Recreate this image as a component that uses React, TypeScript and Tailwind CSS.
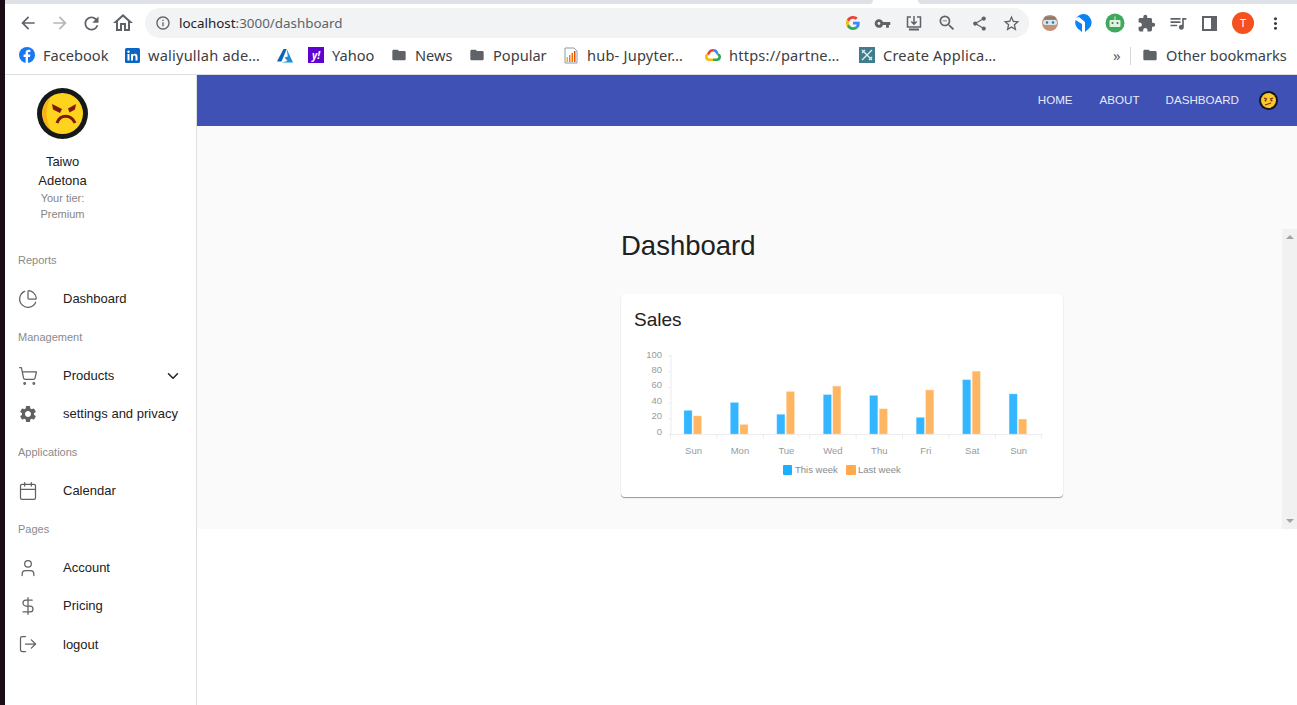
import type { ReactNode } from "react";
import { Calendar, ChevronDown, DollarSign, LogOut, PieChart, ShoppingCart, User } from "lucide-react";
import {
  MdArrowBack,
  MdArrowForward,
  MdExtension,
  MdFolder,
  MdInfoOutline,
  MdMoreVert,
  MdOutlineHome,
  MdOutlineQueueMusic,
  MdRefresh,
  MdSettings,
  MdShare,
  MdStarBorder,
  MdVpnKey,
  MdZoomOut,
} from "react-icons/md";

const thisWeek = [30, 40, 25, 50, 49, 21, 69, 51];
const lastWeek = [23, 12, 54, 61, 32, 56, 80, 19];
const days = ["Sun", "Mon", "Tue", "Wed", "Thu", "Fri", "Sat", "Sun"];

function FacebookIcon() {
  return (
    <svg width="16" height="16" viewBox="0 0 16 16">
      <circle cx="8" cy="8" r="8" fill="#1877f2" />
      <path d="M9 16V10h2l.4-2.4H9V6.2c0-.8.3-1.2 1.2-1.2h1.2V3c-.6-.1-1.2-.2-1.8-.2-1.9 0-3 1.1-3 3.1v1.7H4.6V10h2v6z" fill="#fff" />
    </svg>
  );
}

function LinkedinIcon() {
  return (
    <svg width="15" height="15" viewBox="0 0 15 15">
      <rect width="15" height="15" rx="1.5" fill="#0a66c2" />
      <rect x="2.5" y="6" width="2" height="6.5" fill="#fff" />
      <circle cx="3.5" cy="3.8" r="1.2" fill="#fff" />
      <path d="M6 6h2v1c.4-.7 1.1-1.2 2.1-1.2 1.7 0 2.4 1.1 2.4 2.8v3.9h-2V9c0-.9-.3-1.5-1.1-1.5S8 8.100 8 9v3.500H6z" fill="#fff" />
    </svg>
  );
}

function AzureIcon() {
  return (
    <svg width="16" height="14" viewBox="0 0 16 14">
      <path d="M6.500 0h3.200L4.500 12.500H0z" fill="#0a63b5" />
      <path d="M9.700 0L16 13.500H4.500l6-1.500-3-3.500 3.300-1z" fill="#1b8fdc" />
    </svg>
  );
}

function YahooIcon() {
  return (
    <span className="flex h-4 w-4 items-center justify-center bg-[#5f01d1] text-[10px] font-bold italic leading-none text-white">y!</span>
  );
}

function JupyterIcon() {
  return (
    <svg width="16" height="17" viewBox="0 0 16 17">
      <path d="M2 1h9l3 3v12H2z" fill="#fff" stroke="#8d99a6" />
      <rect x="3.500" y="10" width="1.500" height="5" fill="#f9a825" />
      <rect x="6" y="8" width="1.500" height="7" fill="#f57c00" />
      <rect x="8.500" y="6" width="1.500" height="9" fill="#ef6c00" />
      <rect x="11" y="4" width="1.500" height="11" fill="#e65100" />
    </svg>
  );
}

function CloudIcon() {
  return (
    <svg width="16" height="14" viewBox="0 0 16 14">
      <path d="M4 13h4v-2.500H4.200A1.700 1.700 0 0 1 3.500 7.300L2 5.500A4 4 0 0 0 4 13z" fill="#fbbc05" />
      <path d="M8 13h4a4 4 0 0 0 1.500-7.700l-1.300 1.900A1.700 1.700 0 0 1 11.800 10.500H8z" fill="#34a853" />
      <path d="M2 5.500l1.500 1.800A4 4 0 0 1 5 5.800a3.200 3.200 0 0 1 3-2.300V1a5.500 5.500 0 0 0-5 3z" fill="#ea4335" />
      <path d="M8 1v2.500a3.500 3.500 0 0 1 3 2l1.200 1.700 1.300-1.900A5.600 5.600 0 0 0 8 1z" fill="#4285f4" />
    </svg>
  );
}

function CrossIcon() {
  return (
    <svg width="16" height="16" viewBox="0 0 16 16">
      <rect width="16" height="16" fill="#3f7c8c" />
      <path d="M3 3l10 10M13 3L3 13M3 6l3-3M10 13l3-3" stroke="#dff0f3" strokeWidth="1.300" fill="none" />
    </svg>
  );
}

function GoogleIcon() {
  return (
    <svg width="14" height="14" viewBox="0 0 48 48">
      <path fill="#ea4335" d="M24 9.500c3.500 0 6.700 1.200 9.200 3.600l6.900-6.900C35.900 2.400 30.500 0 24 0 14.600 0 6.500 5.400 2.600 13.200l8 6.200C12.500 13.600 17.800 9.500 24 9.500z" />
      <path fill="#4285f4" d="M47 24.500c0-1.600-.1-3.100-.4-4.500H24v9h12.900c-.6 3-2.200 5.500-4.700 7.200l7.700 6C44.400 38.100 47 31.900 47 24.500z" />
      <path fill="#fbbc05" d="M10.600 28.600A14.500 14.500 0 0 1 10.600 19.400l-8-6.200a24 24 0 0 0 0 21.600z" />
      <path fill="#34a853" d="M24 48c6.500 0 11.900-2.100 15.900-5.800l-7.700-6c-2.200 1.500-4.900 2.300-8.200 2.300-6.200 0-11.500-4.200-13.400-9.900l-8 6.200C6.500 42.600 14.600 48 24 48z" />
    </svg>
  );
}

function AngryFace({ size }: { size: number }) {
  return (
    <svg width={size} height={size} viewBox="0 0 51 51">
      <circle cx="25.500" cy="25.500" r="25.500" fill="#17181a" />
      <circle cx="25.500" cy="25.500" r="20.500" fill="#fdd31e" />
      <path d="M14 9a20.500 20.500 0 0 0 0 33c-6-9-6-24 0-33z" fill="#fbb011" />
      <path d="M15 16l10 5-2 4-7-3.500z" fill="#7d1a10" />
      <path d="M39 16l-8 4.500 1.500 4 5.500-3z" fill="#7d1a10" />
      <path d="M20 35c3-9 14-9 18 0" stroke="#7d1a10" strokeWidth="3" fill="none" />
    </svg>
  );
}

function SmallFace() {
  return (
    <svg width="19" height="19" viewBox="0 0 19 19">
      <circle cx="9.500" cy="9.500" r="9.500" fill="#14161c" />
      <circle cx="9.500" cy="9.500" r="7.500" fill="#f7c92b" />
      <path d="M5 7l3 1.200M14 7l-3 1.200" stroke="#7d2a10" strokeWidth="1.300" />
      <circle cx="6.500" cy="9.500" r="1" fill="#7d2a10" />
      <circle cx="12.500" cy="9.500" r="1" fill="#7d2a10" />
      <path d="M6 14l6-2" stroke="#7d2a10" strokeWidth="1.300" />
    </svg>
  );
}

function AddressBar() {
  return (
    <div className="flex h-[30px] w-[884px] items-center rounded-full bg-[#f1f3f4] pl-[10px] pr-[8px]">
      <MdInfoOutline className="text-[#5f6368]" size={16} />
      <span className="ml-[8px] text-[13.400px] text-[#202124]">
        localhost<span className="text-[#5f6368]">:3000/dashboard</span>
      </span>
      <div className="ml-auto flex items-center gap-[14px] text-[#5f6368]">
        <GoogleIcon />
        <MdVpnKey size={17} />
        <svg width="18" height="18" viewBox="0 0 18 18" fill="none" stroke="currentColor" strokeWidth="1.500">
          <path d="M6 3H2.500v10h13V3H12M9 2v8M6.300 7.500L9 10.200l2.700-2.700" />
          <path d="M4 15.500h10" strokeWidth="2" />
        </svg>
        <MdZoomOut size={20} />
        <MdShare size={17} />
        <MdStarBorder size={19} />
      </div>
    </div>
  );
}

function ExtensionIcons() {
  return (
    <div className="ml-[11px] flex items-center gap-[12px] text-[#5f6368]">
      <svg width="20" height="20" viewBox="0 0 20 20">
        <circle cx="10" cy="10" r="8" fill="#c69176" />
        <rect x="3" y="7" width="14" height="5" rx="2.500" fill="#d7e8ec" />
        <circle cx="7" cy="9.500" r="1.200" fill="#3c6e8f" />
        <circle cx="13" cy="9.500" r="1.200" fill="#3c6e8f" />
        <path d="M5 3.500h10l1 3H4z" fill="#8c7b6b" />
      </svg>
      <svg width="20" height="20" viewBox="0 0 20 20" className="ml-[1px]">
        <path d="M10 1a8.500 8.500 0 0 1 6 14.500L12 19V9L6 4 3.500 5A8.500 8.500 0 0 1 10 1z" fill="#0b84f3" />
        <path d="M2.500 7L9 11v8l-3-2.500A9 9 0 0 1 2.500 7z" fill="#0b84f3" />
      </svg>
      <svg width="20" height="20" viewBox="0 0 20 20">
        <circle cx="10" cy="10" r="9.500" fill="#3fa85c" />
        <rect x="4.500" y="7" width="11" height="7" rx="1" fill="#dff2e3" />
        <circle cx="7.500" cy="10" r="1" fill="#2e7d4a" />
        <circle cx="12.500" cy="10" r="1" fill="#2e7d4a" />
        <rect x="9.500" y="3.500" width="1" height="3.500" fill="#dff2e3" />
      </svg>
      <MdExtension size={19} />
      <MdOutlineQueueMusic size={20} />
      <span className="ml-[2px] h-[15px] w-[15px] border-2 border-r-[6px] border-[#5f6368]" />
      <span className="ml-[3px] flex h-[22px] w-[22px] items-center justify-center rounded-full bg-[#f4511e] text-[11px] text-white">T</span>
      <MdMoreVert size={19} className="text-[#3c4043]" />
    </div>
  );
}

function Bookmark({ icon, label, width, cut }: { icon: ReactNode; label: string; width: string; cut?: boolean }) {
  return (
    <div className={`flex items-center gap-[8px] ${width}`}>
      {icon}
      <span className={`whitespace-nowrap text-[14.600px] text-[#3c4043] ${cut ? "tracking-[0.2px]" : ""}`}>{label}</span>
    </div>
  );
}

function BrowserChrome() {
  const folder = <MdFolder size={16} className="text-[#5f6368]" />;
  return (
    <div className="font-['Noto_Sans',sans-serif]">
      <div className="flex h-[4px] bg-white">
        <div className="h-full w-[868px] rounded-br-[4px] bg-[#dee1e6]" />
        <div className="ml-[45px] h-full flex-1 rounded-bl-[4px] bg-[#dee1e6]" />
      </div>
      <div className="flex h-[38px] items-center pl-[13px]">
        <MdArrowBack size={20} className="text-[#5f6368]" />
        <MdArrowForward size={20} className="ml-[12px] text-[#b4b7bb]" />
        <MdRefresh size={21} className="ml-[11px] text-[#5f6368]" />
        <MdOutlineHome size={24} className="ml-[9px] text-[#5f6368]" />
        <div className="ml-[10px]">
          <AddressBar />
        </div>
        <ExtensionIcons />
      </div>
      <div className="flex h-[33px] items-center border-b border-[#dcdee1] pb-[5px] pl-[14px]">
        <Bookmark icon={<FacebookIcon />} label="Facebook" width="w-[106px]" />
        <Bookmark icon={<LinkedinIcon />} label="waliyullah ade…" width="w-[152px]" cut />
        <div className="w-[31px]">
          <AzureIcon />
        </div>
        <Bookmark icon={<YahooIcon />} label="Yahoo" width="w-[83px]" />
        <Bookmark icon={folder} label="News" width="w-[78px]" />
        <Bookmark icon={folder} label="Popular" width="w-[94px]" />
        <Bookmark icon={<JupyterIcon />} label="hub- Jupyter…" width="w-[142px]" cut />
        <Bookmark icon={<CloudIcon />} label="https://partne…" width="w-[154px]" cut />
        <Bookmark icon={<CrossIcon />} label="Create Applica…" width="w-[254px]" cut />
        <span className="w-[9px] text-[15px] leading-none text-[#5f6368]">»</span>
        <span className="ml-[8px] h-[18px] w-px bg-[#d5d7da]" />
        <div className="ml-[11px]">
          <Bookmark icon={folder} label="Other bookmarks" width="w-[150px]" />
        </div>
      </div>
    </div>
  );
}

function Subheader({ label }: { label: string }) {
  return <div className="flex h-[38.4px] items-center pl-[13px] text-[11px] text-[#8a8a8a]">{label}</div>;
}

function NavItem({ icon, label, trailing }: { icon: ReactNode; label: string; trailing?: ReactNode }) {
  return (
    <div className="flex h-[38.4px] items-center pl-[13px] text-[13px] text-[#212121]">
      <span className="flex w-[45px] items-center text-[#616161]">{icon}</span>
      <span className="whitespace-nowrap">{label}</span>
      {trailing}
    </div>
  );
}

function Sidebar() {
  return (
    <aside className="w-[192px] shrink-0 border-r border-[#e0e0e0] bg-white font-['Liberation_Sans',sans-serif]">
      <div className="flex h-[166.200px] w-[115px] flex-col items-center pt-[13px] text-center">
        <AngryFace size={51} />
        <div className="mt-[13px] text-[13px] leading-[19px] text-[#212121]">
          Taiwo
          <br />
          Adetona
        </div>
        <div className="text-[11px] leading-[16px] text-[#858585]">
          Your tier:
          <br />
          Premium
        </div>
      </div>
      <Subheader label="Reports" />
      <NavItem icon={<PieChart size={20} strokeWidth={1.5} />} label="Dashboard" />
      <Subheader label="Management" />
      <NavItem
        icon={<ShoppingCart size={20} strokeWidth={1.5} />}
        label="Products"
        trailing={<ChevronDown size={18} strokeWidth={2} className="ml-auto mr-[14px] text-[#212121]" />}
      />
      <NavItem icon={<MdSettings size={20} />} label="settings and privacy" />
      <Subheader label="Applications" />
      <NavItem icon={<Calendar size={20} strokeWidth={1.5} />} label="Calendar" />
      <Subheader label="Pages" />
      <NavItem icon={<User size={20} strokeWidth={1.5} />} label="Account" />
      <NavItem icon={<DollarSign size={20} strokeWidth={1.5} />} label="Pricing" />
      <NavItem icon={<LogOut size={20} strokeWidth={1.5} />} label="logout" />
    </aside>
  );
}

function SalesChart() {
  const y = (v: number) => 434 - v * 0.785;
  const axis = "#ececf0";
  const label = "#9a9a9a";
  return (
    <svg width="442" height="140" viewBox="621 345 442 140" className="block">
      <g fontFamily="Liberation Sans, sans-serif" fontSize="9.500" fill={label}>
        {[0, 20, 40, 60, 80, 100].map((v) => (
          <g key={v}>
            <line x1="668" x2="671" y1={y(v) + 0.5} y2={y(v) + 0.5} stroke={axis} />
            <text x="662" y={434.5 - v * 0.77} textAnchor="end">{v}</text>
          </g>
        ))}
        <line x1="671" x2="671" y1="355" y2="435" stroke={axis} />
        <line x1="670" x2="1042" y1="434.500" y2="434.500" stroke={axis} />
        {[...Array(9)].map((_, i) => (
          <line key={i} x1={670.5 + i * 46.4} x2={670.5 + i * 46.4} y1="434" y2="439" stroke={axis} />
        ))}
        {days.map((d, i) => (
          <text key={i} x={693.5 + i * 46.45} y="454" textAnchor="middle">{d}</text>
        ))}
        {thisWeek.map((v, i) => (
          <rect key={i} x={684 + i * 46.45} y={y(v)} width="8" height={v * 0.785} fill="#33b6ff" stroke="#99dbff" strokeWidth="0.4" />
        ))}
        {lastWeek.map((v, i) => (
          <rect key={i} x={693.5 + i * 46.45} y={y(v)} width="8" height={v * 0.785} fill="#ffb663" stroke="#ffdbb1" strokeWidth="0.4" />
        ))}
        <rect x="783" y="465" width="9" height="10" rx="1" fill="#1ab0ff" />
        <text x="795" y="473" fill="#8a8a8a">This week</text>
        <rect x="846" y="465" width="10" height="10" rx="1" fill="#ffab4d" />
        <text x="858" y="473" fill="#8a8a8a">Last week</text>
      </g>
    </svg>
  );
}

function TopBar() {
  return (
    <header className="flex h-[51px] items-center justify-end bg-[#3f51b5] pr-[19px] text-[11.600px] text-[#e8eaf6]">
      <span className="mb-[1px]">HOME</span>
      <span className="mb-[1px] ml-[27px]">ABOUT</span>
      <span className="mb-[1px] ml-[26px]">DASHBOARD</span>
      <span className="ml-[20px]">
        <SmallFace />
      </span>
    </header>
  );
}

function Content() {
  return (
    <div className="flex h-[403px] bg-[#fafafa]">
      <div className="flex-1 pl-[424px] pt-[104px]">
        <h1 className="text-[27.500px] leading-[32px] text-[#212121]">Dashboard</h1>
        <div className="mt-[32px] h-[203px] w-[442px] rounded-[4px] bg-white shadow-[0_1px_1px_rgba(0,0,0,0.4)]">
          <h2 className="pl-[13px] pt-[14px] text-[19px] leading-[24px] text-[#212121]">Sales</h2>
          <div className="mt-[13px]">
            <SalesChart />
          </div>
        </div>
      </div>
      <div className="mt-[103px] flex w-[15px] flex-col items-center justify-between bg-[#f1f1f1] py-[6px]">
        <span className="h-0 w-0 border-x-[4px] border-b-[4px] border-x-transparent border-b-[#a3a3a3]" />
        <span className="h-0 w-0 border-x-[4px] border-t-[4px] border-x-transparent border-t-[#a3a3a3]" />
      </div>
    </div>
  );
}

export default function App() {
  return (
    <div className="flex h-[705px] w-[1297px] overflow-hidden bg-white">
      <div className="w-[5px] shrink-0 bg-[#1a0d16]" />
      <div className="flex min-w-0 flex-1 flex-col">
        <BrowserChrome />
        <div className="flex flex-1">
          <Sidebar />
          <main className="flex-1 font-['Liberation_Sans',sans-serif]">
            <TopBar />
            <Content />
          </main>
        </div>
      </div>
    </div>
  );
}
